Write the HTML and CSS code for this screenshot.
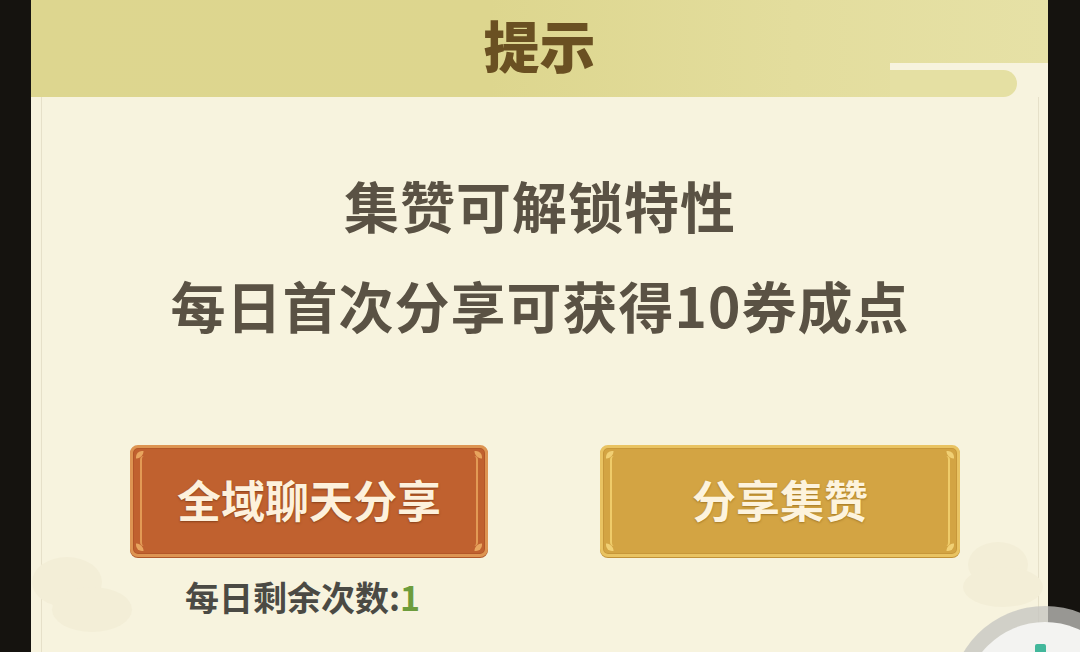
FILE: index.html
```html
<!DOCTYPE html>
<html lang="zh-CN">
<head>
<meta charset="utf-8">
<title>提示</title>
<link rel="stylesheet" href="styles.css">
</head>
<body>
<div class="screen">
  <div class="side side-left"></div>
  <div class="panel">
    <div class="header">
      <h1 class="title">提示</h1>
      <span class="hdr-tail"></span>
    </div>
    <div class="content">
      <span class="cloud cloud-left"></span>
      <span class="cloud cloud-left2"></span>
      <span class="cloud cloud-right"></span>
      <span class="cloud cloud-right2"></span>
      <div class="message">
        <p class="msg-line">集赞可解锁特性</p>
        <p class="msg-line">每日首次分享可获得10券成点</p>
      </div>
      <div class="actions">
        <div class="action-col">
          <button class="btn btn-red">全域聊天分享</button>
          <p class="remain">每日剩余次数:<span class="remain-num">1</span></p>
        </div>
        <div class="action-col">
          <button class="btn btn-gold">分享集赞</button>
        </div>
      </div>
    </div>
  </div>
  <div class="side side-right"></div>
  <div class="float-ball"><span class="float-dot"></span></div>
</div>
</body>
</html>
```

FILE: styles.css
```css
* { box-sizing: border-box; }
html, body {
  margin: 0;
  padding: 0;
  background: #141310;
  width: 1080px;
  height: 652px;
  overflow: hidden;
  font-family: "Noto Sans CJK SC", "Noto Sans", sans-serif;
}
.screen {
  position: relative;
  display: flex;
  width: 1080px;
  height: 652px;
  overflow: hidden;
}
.side { background: #15130f; }
.side-left { width: 31px; }
.side-right { width: 32px; }

.panel {
  flex: 1;
  display: flex;
  flex-direction: column;
  background: #f7f3de;
}

.header {
  position: relative;
  height: 97px;
  background: linear-gradient(90deg, #ddd68f 0%, #ddd68e 45%, #e3dd9d 75%, #e6e1a6 100%);
  display: flex;
  justify-content: center;
  align-items: flex-start;
}
.title {
  margin: 0;
  padding-top: 10px;
  font-size: 56px;
  line-height: 68px;
  font-weight: 900;
  color: #6a5022;
}
.hdr-tail {
  position: absolute;
  left: 859px;
  right: 0;
  top: 63px;
  height: 34px;
  background: #f7f3de;
}
.hdr-tail::before {
  content: "";
  position: absolute;
  left: 0;
  top: 7px;
  width: 127px;
  height: 27px;
  background: #e5e0a3;
  border-radius: 0 14px 14px 0;
}

.content {
  position: relative;
  flex: 1;
  margin: 0 9px 0 10px;
  border-left: 1px solid #e6e0c9;
  border-right: 1px solid #e6e0c9;
  display: flex;
  flex-direction: column;
}
.cloud {
  position: absolute;
  background: #f3eed7;
  border-radius: 50%;
}
.cloud-left { left: -10px; top: 460px; width: 70px; height: 50px; }
.cloud-left2 { left: 10px; top: 490px; width: 80px; height: 45px; }
.cloud-right { right: 10px; top: 445px; width: 60px; height: 45px; }
.cloud-right2 { right: -5px; top: 470px; width: 80px; height: 40px; }

.message {
  position: relative;
  padding-top: 57px;
  text-align: center;
}
.msg-line {
  margin: 0;
  font-size: 55px;
  line-height: 100px;
  font-weight: 700;
  color: #5a5244;
  letter-spacing: 1px;
}

.actions {
  position: relative;
  display: flex;
  gap: 112px;
  padding-left: 88px;
  margin-top: 91px;
}
.action-col {
  display: flex;
  flex-direction: column;
}
.btn {
  position: relative;
  width: 358px;
  height: 112px;
  border-radius: 8px;
  font-family: inherit;
  font-size: 44px;
  font-weight: 700;
  color: #fdf1dc;
  text-shadow: 0 1px 2px rgba(90, 40, 10, .55);
  display: flex;
  align-items: center;
  justify-content: center;
  padding: 0 0 4px;
  cursor: pointer;
}
.btn::before {
  content: "";
  position: absolute;
  top: 8px; bottom: 8px; left: 7px; right: 7px;
  border-left: 2px solid;
  border-right: 2px solid;
  border-radius: 4px;
}
.btn::after {
  content: "";
  position: absolute;
  inset: 3px;
  border-radius: 6px;
  background:
    radial-gradient(circle at 0 0, var(--orn) 0 7px, transparent 8px),
    radial-gradient(circle at 100% 0, var(--orn) 0 7px, transparent 8px),
    radial-gradient(circle at 0 100%, var(--orn) 0 7px, transparent 8px),
    radial-gradient(circle at 100% 100%, var(--orn) 0 7px, transparent 8px);
  pointer-events: none;
}
.btn-red {
  --orn: #e8a55e;
  background: #c0612f;
  border: 3px solid #dd9452;
  box-shadow: 0 1px 0 #b0582a, inset 0 0 0 1px #b35628;
}
.btn-red::before { border-color: #e29a55; }
.btn-gold {
  --orn: #f1d074;
  width: 360px;
  background: #d3a443;
  border: 3px solid #e9c362;
  box-shadow: 0 1px 0 #c29238, inset 0 0 0 1px #c7973a;
  color: #fdf3dd;
  text-shadow: 0 1px 2px rgba(120, 80, 10, .5);
}
.btn-gold::before { border-color: #efcc6a; }

.remain {
  margin: 19px 0 0 55px;
  font-size: 34px;
  line-height: 42px;
  font-weight: 700;
  color: #4b4a44;
}
.remain-num {
  color: #6d9c3c;
}

.float-ball {
  position: absolute;
  left: 950px;
  top: 606px;
  width: 190px;
  height: 190px;
  border-radius: 50%;
  background: rgba(196, 196, 192, .75);
  display: flex;
  align-items: flex-start;
  justify-content: center;
}
.float-ball::before {
  content: "";
  position: absolute;
  left: 14px;
  top: 16px;
  width: 162px;
  height: 162px;
  border-radius: 50%;
  background: #f3f3f1;
}
.float-dot {
  position: relative;
  margin-top: 38px;
  margin-left: -10px;
  width: 11px;
  height: 10px;
  border-radius: 2px;
  background: #42b79b;
}
```
